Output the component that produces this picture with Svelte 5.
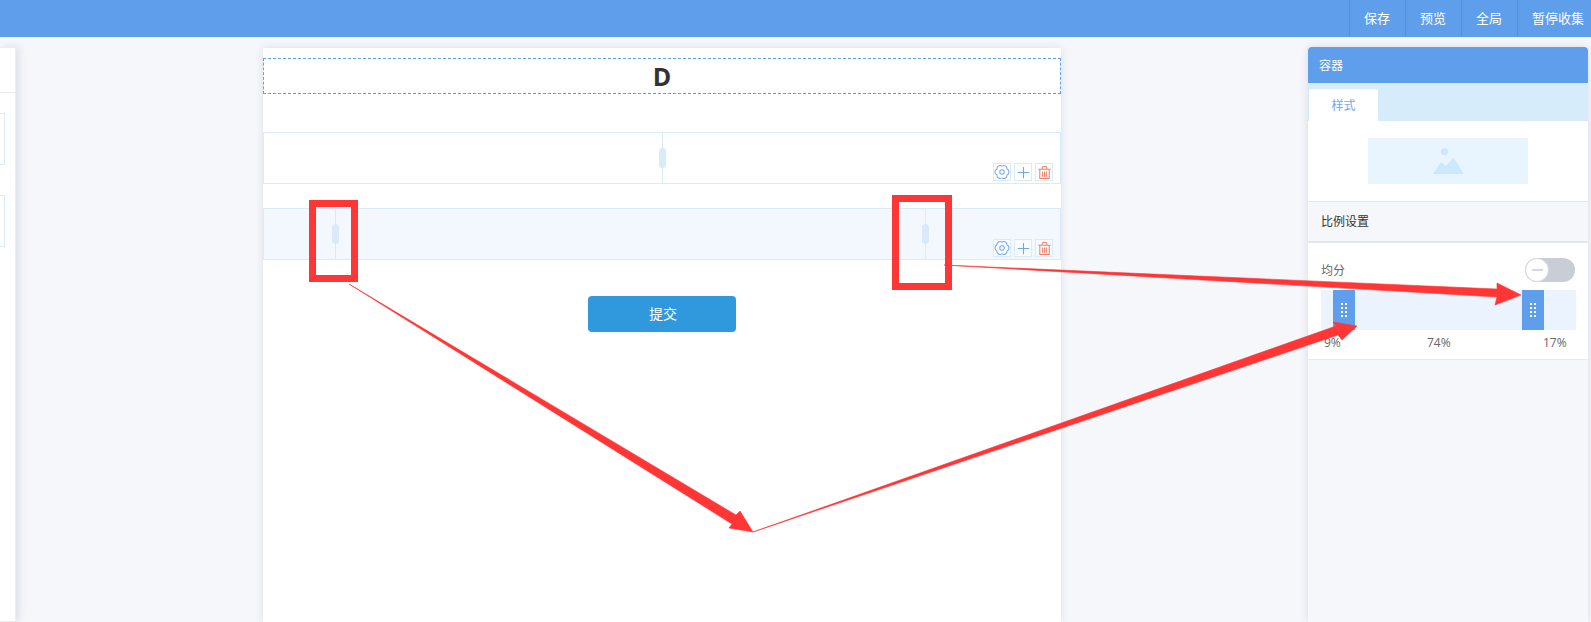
<script>
  const tools = ['保存', '预览', '全局', '暂停收集'];
  const rows = [
    { id: 1, splits: ['50%'], active: false },
    { id: 2, splits: ['8.9%', '83%'], active: true }
  ];
  const ratios = [
    { label: '9%', x: 3 },
    { label: '74%', x: 106 },
    { label: '17%', x: 222 }
  ];
</script>

<div class="page">
  <header class="topbar">
    {#each tools as t}
      <button class="tool">{t}</button>
    {/each}
  </header>

  <main class="workspace">
    <aside class="left-panel">
      <div class="left-head"></div>
      <div class="left-item"></div>
      <div class="left-item"></div>
    </aside>

    <section class="canvas">
      <div class="title-row">D</div>
      {#each rows as row (row.id)}
        <div class="grid-row" class:active={row.active}>
          {#each row.splits as s}
            <div class="split" style="left: {s}"><span class="grip"></span></div>
          {/each}
          <div class="row-tools">
            <span class="row-btn">
              <svg viewBox="2 2 12 12" width="16" height="16" fill="none" stroke="#7aa9ee" stroke-width="0.800">
                <path d="M11.810 10.200A2.400 2.400 0 0 1 8 12.400A2.400 2.400 0 0 1 4.190 10.200A2.400 2.400 0 0 1 4.190 5.800A2.400 2.400 0 0 1 8 3.600A2.400 2.400 0 0 1 11.810 5.800A2.400 2.400 0 0 1 11.810 10.200z"/>
                <circle cx="8" cy="8" r="1.700"/>
              </svg>
            </span>
            <span class="row-btn">
              <svg viewBox="0 0 16 16" width="15" height="15" fill="none" stroke="#6ea5ef" stroke-width="1.100">
                <path d="M8 2v12M2 8h12"/>
              </svg>
            </span>
            <span class="row-btn">
              <svg viewBox="0 0 16 16" width="15" height="15" fill="none" stroke="#ee8068" stroke-width="1.100">
                <path d="M1.500 4.500h13M5.500 4.500V3q0-1.300 1.300-1.300h2.400q1.300 0 1.300 1.300v1.500M3 4.500v10h10v-10M6 7v5.500M8 7v5.500M10 7v5.500"/>
              </svg>
            </span>
          </div>
        </div>
      {/each}
      <div class="submit-wrap">
        <button class="submit">提交</button>
      </div>
    </section>

    <aside class="right-panel">
      <div class="panel-head">容器</div>
      <div class="tabs"><span class="tab">样式</span></div>
      <div class="preview-wrap">
        <div class="preview">
          <svg viewBox="0 0 32 28" width="32" height="28">
            <circle cx="12.500" cy="4.600" r="3.600" fill="#cce8fd"/>
            <path d="M1 27l8-12 5 4 7.500-8.500L32 27z" fill="#cce8fd"/>
          </svg>
        </div>
      </div>
      <div class="section-title">比例设置</div>
      <div class="ratio">
        <div class="ratio-head">
          <span>均分</span>
          <span class="switch"><span class="knob"></span></span>
        </div>
        <div class="bar">
          <span class="handle h1"><i></i></span>
          <span class="handle h2"><i></i></span>
        </div>
        <div class="labels">
          {#each ratios as r}
            <span style="left: {r.x}px">{r.label}</span>
          {/each}
        </div>
      </div>
    </aside>
  </main>

  <!-- annotations drawn over the screenshot -->
  <svg class="marks" viewBox="0 0 1591 622" width="1591" height="622">
    <rect x="312.500" y="203.500" width="42" height="75" fill="none" stroke="#ff3636" stroke-width="7"/>
    <rect x="895.500" y="198.500" width="53" height="88" fill="none" stroke="#ff3636" stroke-width="7"/>
    <g fill="#ff3636" stroke="#ff3636" stroke-width="0.600">
      <polygon points="944,265 1497,289 1497,283 1521,295 1495,305 1497,297"/>
      <polygon points="349,284 736,515 740,511 753,532 729,528 732,524"/>
      <polygon points="753,532 1336,326 1333,322 1357,326 1342,340 1338,335"/>
    </g>
  </svg>
</div>

<style>
  :global(body) {
    margin: 0;
    background: #f5f7fb;
    font-family: "Open Sans", "Noto Sans CJK SC", sans-serif;
  }

  .page {
    position: relative;
    height: 622px;
    overflow: hidden;
  }

  .topbar {
    height: 37px;
    background: #5f9eea;
    display: flex;
    justify-content: flex-end;
  }

  .tool {
    width: 56px;
    flex: none;
    padding: 0 0 2px 14px;
    box-sizing: border-box;
    border: 0;
    border-left: 1px solid #5590dc;
    background: none;
    color: #fff;
    font: 13px "Open Sans", "Noto Sans CJK SC", sans-serif;
    white-space: nowrap;
    text-align: left;
  }

  .tool:last-child {
    width: 74px;
  }

  .workspace {
    height: 585px;
    padding-top: 10px;
    box-sizing: border-box;
    display: grid;
    grid-template-columns: 16px 1fr 280px;
  }

  .left-panel {
    background: #fff;
    border: 1px solid #ececf1;
    border-left: 0;
    box-shadow: 3px 0 8px rgba(40, 50, 80, 0.12);
    box-sizing: border-box;
    overflow: hidden;
  }

  .left-head {
    height: 44px;
    border-bottom: 1px solid #e9ebf0;
    margin-bottom: 20px;
  }

  .left-item {
    width: 5px;
    height: 52px;
    box-sizing: border-box;
    border: 1px solid #d9eafb;
    border-left: 0;
    margin-bottom: 30px;
  }

  .canvas {
    width: 798px;
    margin: 1px 0 0 247px;
    padding: 10px 0 0;
    box-sizing: border-box;
    background: #fff;
    box-shadow: 0 0 8px rgba(40, 50, 80, 0.12);
  }

  .title-row {
    height: 36px;
    box-sizing: border-box;
    border: 1px dashed #5f9eea;
    color: #333;
    font: 700 25px/34px "Open Sans", sans-serif;
    text-align: center;
    margin-bottom: 38px;
  }

  .grid-row {
    position: relative;
    height: 52px;
    box-sizing: border-box;
    border: 1px solid #d9eafb;
    margin-bottom: 24px;
  }

  .grid-row.active {
    background: #f3f8fe;
  }

  .split {
    position: absolute;
    top: 0;
    bottom: 0;
    width: 1px;
    background: #d9eafb;
  }

  .grip {
    position: absolute;
    top: 15px;
    left: -3px;
    width: 7px;
    height: 20px;
    border-radius: 4px;
    background: #d9eafb;
  }

  .row-tools {
    position: absolute;
    right: 7px;
    bottom: 2px;
    display: flex;
    gap: 3px;
  }

  .row-btn {
    width: 18px;
    height: 18px;
    box-sizing: border-box;
    border: 1px solid #d9eafb;
    background: #fff;
    display: flex;
    align-items: center;
    justify-content: center;
  }

  .grid-row.active .row-btn {
    background: #f8fbff;
  }

  .submit-wrap {
    display: flex;
    justify-content: center;
    padding-top: 12px;
  }

  .submit {
    width: 148px;
    height: 36px;
    padding: 0 0 2px 2px;
    border: 0;
    border-radius: 4px;
    background: #3099de;
    color: #fff;
    font: 14px "Open Sans", "Noto Sans CJK SC", sans-serif;
  }

  .right-panel {
    width: 280px;
    margin-left: -3px;
    background: #f5f7fb;
    border-radius: 4px 4px 0 0;
    box-shadow: 0 0 8px rgba(40, 50, 80, 0.14);
    font-size: 12px;
  }

  .panel-head {
    height: 36px;
    padding-left: 11px;
    background: #5f9eea;
    border-radius: 4px 4px 0 0;
    color: #fff;
    line-height: 37px;
  }

  .tabs {
    height: 38px;
    padding: 6px 0 0 1px;
    box-sizing: border-box;
    background: #d7ecfb;
    display: flex;
  }

  .tab {
    width: 69px;
    background: #fff;
    border-radius: 3px 3px 0 0;
    color: #6ea5ef;
    text-align: center;
    line-height: 34px;
  }

  .preview-wrap {
    height: 81px;
    padding-top: 17px;
    box-sizing: border-box;
    background: #fff;
    border-bottom: 1px solid #e6e9ef;
  }

  .preview {
    width: 160px;
    height: 46px;
    margin-left: 60px;
    background: #e9f5fe;
    display: flex;
    align-items: center;
    justify-content: center;
  }

  .section-title {
    height: 41px;
    padding-left: 13px;
    color: #333;
    line-height: 40px;
    border-bottom: 2px solid #e3e8ef;
    box-sizing: border-box;
  }

  .ratio {
    height: 117px;
    padding: 15px 13px 0;
    box-sizing: border-box;
    background: #fff;
    border-bottom: 1px solid #e6e9ef;
    color: #666;
  }

  .ratio-head {
    height: 32px;
    display: flex;
    justify-content: space-between;
    align-items: flex-start;
    line-height: 26px;
  }

  .switch {
    position: relative;
    width: 50px;
    height: 24px;
    border-radius: 12px;
    background: #c9ced6;
  }

  .knob {
    position: absolute;
    left: 0;
    top: 0;
    width: 24px;
    height: 24px;
    box-sizing: border-box;
    border: 1px solid #d5d8de;
    border-radius: 50%;
    background: #fff;
  }

  .knob::after {
    content: '';
    position: absolute;
    left: 6px;
    top: 10px;
    width: 11px;
    height: 2px;
    background: #d5d8de;
  }

  .bar {
    position: relative;
    height: 40px;
    width: 255px;
    background: #ebf3fe;
  }

  .handle {
    position: absolute;
    top: 0;
    width: 22px;
    height: 40px;
    background: #5f9eea;
  }

  .h1 { left: 12px; }
  .h2 { left: 201px; }

  .handle i {
    position: absolute;
    left: 8px;
    top: 13px;
    width: 6px;
    height: 14px;
    background: conic-gradient(#fff 25%, transparent 0) -2px 0 / 4px 4px;
  }

  .labels {
    position: relative;
    height: 22px;
    margin-top: 4px;
    color: #666;
    font-size: 12px;
    line-height: 17px;
  }

  .labels span {
    position: absolute;
    top: 0;
  }

  .marks {
    position: absolute;
    left: 0;
    top: 0;
    pointer-events: none;
  }
</style>
